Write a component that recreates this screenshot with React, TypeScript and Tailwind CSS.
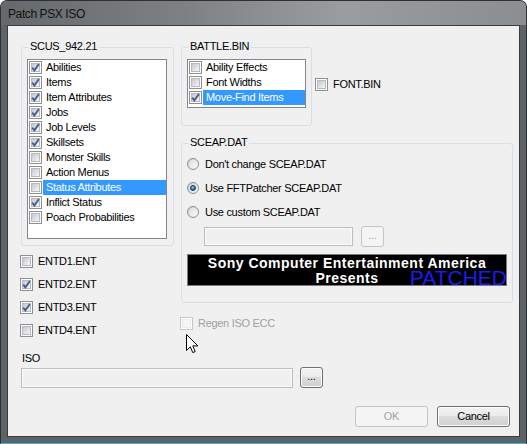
import clsx from 'clsx'
import type { ReactNode } from 'react'

const Check = ({ checked, disabled }: { checked?: boolean; disabled?: boolean }) => (
  <span
    className={clsx(
      'relative flex h-[13px] w-[13px] shrink-0 items-center justify-center border bg-white',
      disabled ? 'border-[#c8c8c8]' : 'border-[#8e8f8f]'
    )}
  >
    <span
      className={clsx(
        'h-[9px] w-[9px] border',
        disabled
          ? 'border-[#ececec] bg-[#f6f6f6]'
          : 'border-[#b7bbc0] bg-linear-to-br from-[#c4c8ce] to-[#f6f6f6]'
      )}
    />
    {checked && (
      <svg className="absolute left-0 top-0" width="11" height="11" viewBox="0 0 11 11">
        <path d="M2.2 5.6 L4.4 8.4 L8.9 2" fill="none" stroke="#4b5b90" strokeWidth="1.9" />
      </svg>
    )}
  </span>
)

const Radio = ({ on }: { on?: boolean }) => (
  <span className="flex h-[12px] w-[12px] shrink-0 items-center justify-center rounded-full border border-[#8e8f8f] bg-linear-to-br from-[#c9ccd0] to-[#fbfbfb]">
    {on ? (
      <span className="h-[6px] w-[6px] rounded-full border border-[#143c5c] bg-[radial-gradient(circle_at_40%_35%,#8fd6f6,#1b70aa_60%,#0b3a62)]" />
    ) : (
      <span className="h-[8px] w-[8px] rounded-full bg-linear-to-br from-[#dcdfe2] to-[#f7f7f7]" />
    )}
  </span>
)

const Group = ({ title, className, children }: { title: string; className: string; children: ReactNode }) => (
  <div className={clsx('relative shrink-0 rounded-[3px] border border-[#d5dfe5]', className)}>
    <span className="absolute -top-[8px] left-[6px] bg-[#f0f0f0] px-[2px] leading-[13px]">{title}</span>
    {children}
  </div>
)

const ListItem = ({ label, checked, selected }: { label: string; checked?: boolean; selected?: boolean }) => (
  <div className="flex h-[15px] items-center">
    <span className="ml-px mr-px">
      <Check checked={checked} />
    </span>
    <span className={clsx('flex h-[15px] flex-1 items-center pl-[3px]', selected && 'bg-[#3399ff] text-white')}>
      {label}
    </span>
  </div>
)

const Btn = ({ children, disabled, className }: { children: ReactNode; disabled?: boolean; className: string }) => (
  <button
    type="button"
    className={clsx(
      'flex shrink-0 items-center justify-center rounded-[3px] border leading-[13px]',
      disabled
        ? 'border-[#c3c5c7] bg-[#f4f4f4] text-[#a3a3a3]'
        : 'border-[#707070] bg-[linear-gradient(#f2f2f2_0%,#ebebeb_50%,#dddddd_50%,#cfcfcf_100%)] text-black shadow-[inset_0_0_0_1px_#fcfcfc]',
      className
    )}
  >
    {children}
  </button>
)

const TextBox = ({ className }: { className: string }) => (
  <div className={clsx('shrink-0 border border-[#bdbdbd] bg-[#f0f0f0] shadow-[inset_0_0_0_1px_#fafafa]', className)} />
)

const scus = [
  { label: 'Abilities', checked: true },
  { label: 'Items', checked: true },
  { label: 'Item Attributes', checked: true },
  { label: 'Jobs', checked: true },
  { label: 'Job Levels', checked: true },
  { label: 'Skillsets', checked: true },
  { label: 'Monster Skills' },
  { label: 'Action Menus' },
  { label: 'Status Attributes', selected: true },
  { label: 'Inflict Status', checked: true },
  { label: 'Poach Probabilities' },
]

const battle = [
  { label: 'Ability Effects' },
  { label: 'Font Widths' },
  { label: 'Move-Find Items', checked: true, selected: true },
]

const entd = [
  { label: 'ENTD1.ENT' },
  { label: 'ENTD2.ENT', checked: true },
  { label: 'ENTD3.ENT', checked: true },
  { label: 'ENTD4.ENT' },
]

const sceap = [
  { label: "Don't change SCEAP.DAT" },
  { label: 'Use FFTPatcher SCEAP.DAT', on: true },
  { label: 'Use custom SCEAP.DAT' },
]

export default function App() {
  return (
    <div className="relative flex h-[444px] w-[527px] flex-col overflow-hidden rounded-t-[7px] border border-[#2e3133] border-b-[#35b5de] bg-[#5f6365] px-[6px] pb-[6px] font-['Liberation_Sans',Arial,sans-serif] text-[11px] tracking-[-0.3px] text-black shadow-[inset_0_1px_0_rgba(255,255,255,0.45)]">
      {/* title bar */}
      <div className="-mx-[6px] h-[24px] shrink-0 bg-[linear-gradient(90deg,#65696b_0%,#7d8183_35%,#9a9d9f_65%,#8b8e90_100%)] pl-[7px] pt-[6px] text-[12px] leading-[14px] tracking-[-0.4px] text-[#111]">
        Patch PSX ISO
      </div>

      {/* client area */}
      <div className="flex h-[412px] w-[513px] flex-col border border-[#3b3b3b] bg-[#f0f0f0] pl-[13px] pt-[21px]">
        <div className="flex gap-[7px]">
          {/* left column */}
          <div className="flex flex-col">
            <Group title="SCUS_942.21" className="h-[199px] w-[153px]">
              <div className="ml-[5px] mt-[11px] h-[180px] w-[140px] border border-[#828790] bg-white">
                {scus.map((it) => (
                  <ListItem key={it.label} {...it} />
                ))}
              </div>
            </Group>
            <div className="-ml-px mt-[9px] flex flex-col gap-[10px]">
              {entd.map((it) => (
                <div key={it.label} className="flex h-[13px] items-center gap-[5px] leading-[13px]">
                  <Check checked={it.checked} />
                  {it.label}
                </div>
              ))}
            </div>
          </div>

          {/* right column */}
          <div className="flex flex-col">
            <div className="flex items-start">
              <Group title="BATTLE.BIN" className="h-[79px] w-[131px]">
                <div className="ml-[5px] mt-[11px] h-[49px] w-[119px] border border-[#828790] bg-white">
                  {battle.map((it) => (
                    <ListItem key={it.label} {...it} />
                  ))}
                </div>
              </Group>
              <div className="ml-[3px] mt-[31px] flex h-[13px] items-center gap-[5px] leading-[13px]">
                <Check />
                FONT.BIN
              </div>
            </div>

            <Group title="SCEAP.DAT" className="mt-[17px] h-[160px] w-[332px]">
              <div className="flex flex-col pl-[5px] pt-[8px]">
                {sceap.map((it) => (
                  <div key={it.label} className="flex h-[24px] items-center gap-[6px] leading-[13px]">
                    <Radio on={it.on} />
                    {it.label}
                  </div>
                ))}
                <div className="ml-[17px] mt-[2px] flex items-start">
                  <TextBox className="mt-px h-[19px] w-[149px]" />
                  <Btn disabled className="ml-[8px] h-[21px] w-[23px] pb-[3px]">
                    ...
                  </Btn>
                </div>
                <div className="relative mt-[7px] h-[32px] w-[320px] overflow-hidden border border-[#7c7c7c] bg-black pt-px text-center text-[14px] font-bold leading-[15px] tracking-[0.5px] text-white">
                  <div>Sony Computer Entertainment America</div>
                  <div>Presents</div>
                  <span className="absolute -right-[1px] top-[12px] text-[21px] font-normal leading-[21px] tracking-normal text-[#1c1cf0]">
                    PATCHED
                  </span>
                </div>
              </div>
            </Group>

            <div className="-ml-px mt-[14px] flex h-[13px] items-center gap-[5px] leading-[13px] text-[#a0a0a0]">
              <Check disabled />
              Regen ISO ECC
            </div>
          </div>
        </div>

        {/* ISO path */}
        <div className="ml-px mt-[15px] leading-[13px]">ISO</div>
        <div className="mt-[2px] flex items-start">
          <TextBox className="mt-px h-[20px] w-[272px]" />
          <Btn className="ml-[7px] h-[21px] w-[23px] pb-[3px]">...</Btn>
        </div>

        {/* dialog buttons */}
        <div className="mt-[18px] flex justify-end gap-[9px] pr-[9px]">
          <Btn disabled className="h-[21px] w-[73px]">
            OK
          </Btn>
          <Btn className="h-[21px] w-[73px]">Cancel</Btn>
        </div>
      </div>

      {/* mouse pointer */}
      <svg className="absolute left-[185px] top-[333px]" width="13" height="20" viewBox="0 0 13 20">
        <path d="M0.5 0.5 L0.5 16.5 L4.3 12.8 L6.8 18.6 L9.2 17.6 L6.8 11.9 L11.9 11.9 Z" fill="white" stroke="black" strokeWidth="1" />
      </svg>
    </div>
  )
}
